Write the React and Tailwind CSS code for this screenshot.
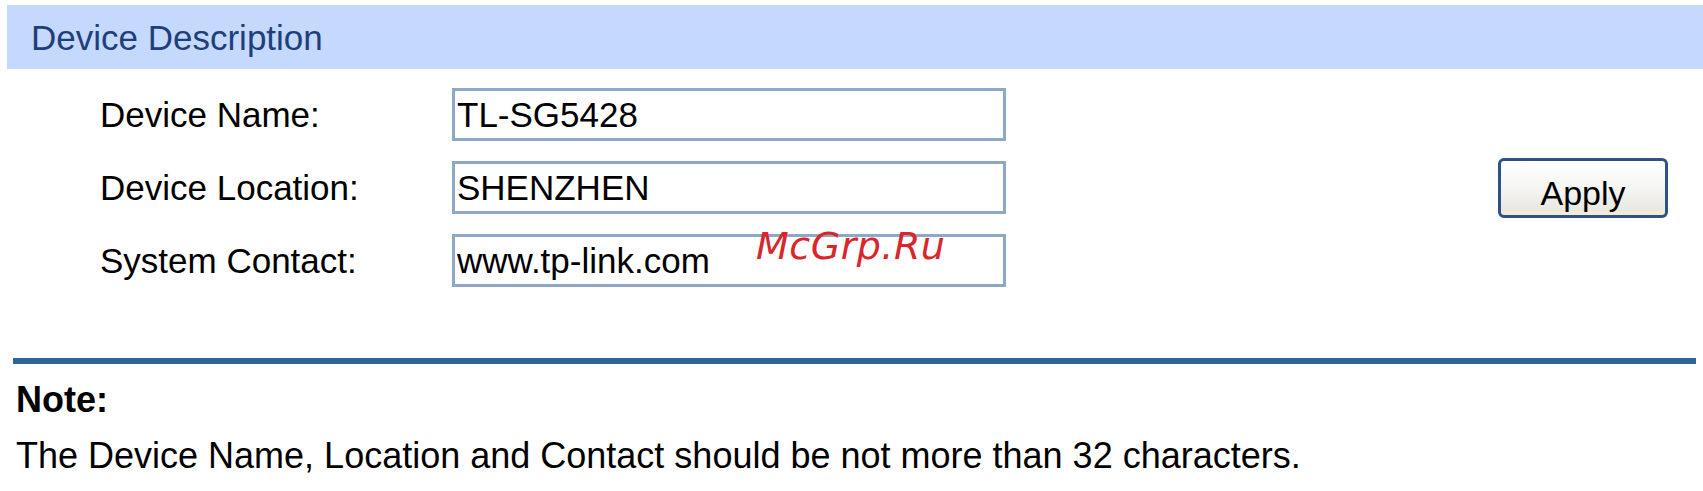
import React from 'react'

const rows = [
  { label: 'Device Name:', value: 'TL-SG5428' },
  { label: 'Device Location:', value: 'SHENZHEN' },
  { label: 'System Contact:', value: 'www.tp-link.com' },
]

const font = { fontFamily: '"Liberation Sans", Arial, sans-serif' }

export default function App() {
  return (
    <div className="relative w-[1703px] h-[491px] bg-white overflow-hidden text-black" style={font}>
      {/* Section title bar */}
      <div className="ml-[7px] mt-[5px] h-[64px] bg-[#c5d9fe] flex items-center pl-[24px]">
        <span className="text-[35px] text-[#1f3f7c] leading-none">Device Description</span>
      </div>

      {/* Form */}
      <div className="flex items-center mt-[19px]">
        <div className="flex flex-col gap-[20px] pl-[100px]">
          {rows.map((r) => (
            <div key={r.label} className="flex items-center">
              <div className="w-[352px] text-[35px] leading-none">{r.label}</div>
              <input
                type="text"
                defaultValue={r.value}
                className="w-[554px] h-[53px] border-[3px] border-[#8ea8c8] bg-white px-[2px] text-[35px] text-black outline-none"
                style={font}
              />
            </div>
          ))}
        </div>
        <button
          type="button"
          className="ml-[492px] w-[170px] h-[60px] rounded-[6px] border-[3px] border-[#2c5287] bg-gradient-to-b from-white via-[#f5f5f2] to-[#e6e5de] shadow-[inset_0_-4px_0_#f3ecd0] text-[34px] leading-none pt-[10px]"
          style={font}
        >
          Apply
        </button>
      </div>

      {/* Divider */}
      <div className="ml-[13px] mt-[71px] w-[1683px] h-[6px] bg-[#2d6799]" />

      {/* Note */}
      <div className="pl-[16px] pt-[18px]">
        <div className="text-[36px] font-bold leading-none">Note:</div>
        <div className="text-[36px] leading-none mt-[20px]">
          The Device Name, Location and Contact should be not more than 32 characters.
        </div>
      </div>

      {/* Watermark */}
      <div
        className="absolute left-[756px] top-[227px] text-[38px] tracking-[0.5px] italic text-[#d8262b] leading-none"
        style={{ fontFamily: '"DejaVu Sans", sans-serif' }}
      >
        McGrp.Ru
      </div>
    </div>
  )
}
